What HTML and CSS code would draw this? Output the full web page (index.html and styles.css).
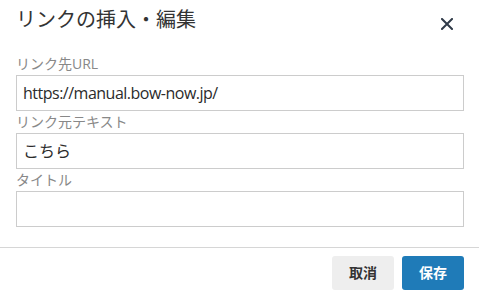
FILE: index.html
```html
<!DOCTYPE html>
<html lang="ja">
<head>
<meta charset="utf-8">
<link rel="stylesheet" href="styles.css">
</head>
<body>
<div class="dialog">
  <div class="header">
    <div class="title">リンクの挿入・編集</div>
    <div class="close" aria-label="close">
      <svg width="12" height="12" viewBox="0 0 12 12"><path d="M1 1 L11 11 M11 1 L1 11" stroke="#2f3a48" stroke-width="2" stroke-linecap="square" fill="none"/></svg>
    </div>
  </div>
  <div class="form">
    <div class="label">リンク先URL</div>
    <div class="input url">https://manual.bow-now.jp/</div>
    <div class="label">リンク元テキスト</div>
    <div class="input">こちら</div>
    <div class="label">タイトル</div>
    <div class="input"></div>
  </div>
  <div class="sep"></div>
  <div class="footer">
    <div class="btn cancel">取消</div>
    <div class="btn save">保存</div>
  </div>
</div>
</body>
</html>
```

FILE: styles.css
```css
html, body {
  margin: 0;
  padding: 0;
  background: #ffffff;
}
body {
  font-family: "Open Sans", "Noto Sans CJK JP", sans-serif;
  color: #333;
  width: 479px;
  height: 296px;
  overflow: hidden;
}
.header {
  display: flex;
  justify-content: space-between;
  align-items: flex-start;
  height: 53px;
  padding: 6px 26px 0 16px;
  box-sizing: border-box;
}
.title {
  font-size: 20px;
  line-height: 28px;
  color: #333;
  font-weight: 400;
}
.close {
  margin-top: 12px;
  width: 12px;
  height: 12px;
  display: flex;
}
.form {
  width: 448px;
  margin-left: 16px;
  display: flex;
  flex-direction: column;
}
.label {
  font-size: 14px;
  line-height: 22px;
  height: 22px;
  color: #888;
}
.input {
  height: 36px;
  box-sizing: border-box;
  border: 1px solid #cccccc;
  padding: 0 6px;
  font-size: 16px;
  line-height: 34px;
  color: #2b2b2b;
}
.url {
  letter-spacing: -0.5px;
}
.sep {
  margin-top: 20px;
  border-top: 1px solid #d6d6d6;
  height: 0;
}
.footer {
  display: flex;
  justify-content: flex-end;
  gap: 8px;
  padding: 8px 15px 0 0;
}
.btn {
  width: 62px;
  height: 34px;
  border-radius: 3px;
  font-size: 14px;
  font-weight: 700;
  line-height: 34px;
  text-align: center;
}
.cancel {
  background: #eeeeee;
  color: #333;
}
.save {
  background: #1f7bb8;
  color: #ffffff;
}
```
